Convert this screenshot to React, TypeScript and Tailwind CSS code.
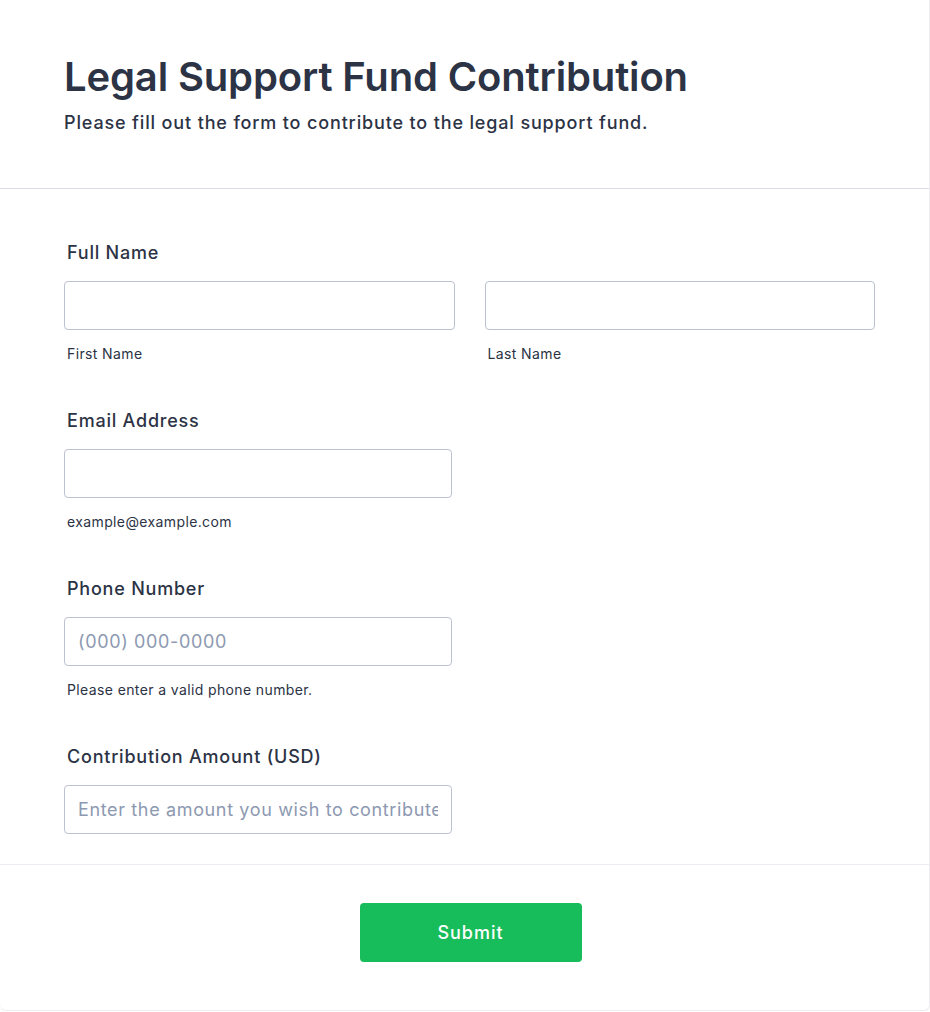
import React from "react";

function Section({
  label,
  children,
  sub,
  last,
}: {
  label: string;
  children: React.ReactNode;
  sub?: React.ReactNode;
  last?: boolean;
}) {
  return (
    <div className={last ? "" : "mb-[43px]"}>
      <div className="pl-[3px] pt-[2px] text-[18px] leading-[24px] font-medium tracking-[0.78px] text-[#2c3345]">
        {label}
      </div>
      <div className="mt-[16px]">{children}</div>
      {sub}
    </div>
  );
}

function Input({ placeholder, className }: { placeholder?: string; className?: string }) {
  return (
    <input
      type="text"
      placeholder={placeholder}
      className={
        "block h-[49px] rounded-[4px] border border-[#bcc2cf] bg-white px-[13px] text-[18px] tracking-[0.64px] text-[#2c3345] placeholder:text-[#8d99b1] outline-none " +
        (className ?? "")
      }
    />
  );
}

function Sub({ text }: { text: string }) {
  return (
    <div className="mt-[14px] pl-[3px] text-[14px] leading-[20px] tracking-[0.38px] text-[#2c3345]">{text}</div>
  );
}

export default function App() {
  return (
    <div className="min-h-screen bg-white" style={{ fontFamily: "Inter, 'Noto Sans', sans-serif" }}>
      <div className="w-[930px] h-[1011px] rounded-b-[6px] border-r border-b border-[#ececf2] bg-white">
        <div className="px-[64px] pt-[53px] pb-[53px] border-b border-[#dcdbe9]">
          <h1 className="text-[40px] leading-[48px] font-semibold text-[#2c3345] tracking-[-0.15px]">
            Legal Support Fund Contribution
          </h1>
          <p className="mt-[10px] text-[18px] leading-[24px] font-medium tracking-[0.85px] text-[#2c3345]">
            Please fill out the form to contribute to the legal support fund.
          </p>
        </div>

        <div className="pl-[64px] pr-[54px] pt-[50px] pb-[30px] border-b border-[#ececf3]">
          <Section label="Full Name">
            <div className="flex gap-[30px]">
              <div className="flex-1">
                <Input className="w-full" />
                <Sub text="First Name" />
              </div>
              <div className="flex-1">
                <Input className="w-full" />
                <Sub text="Last Name" />
              </div>
            </div>
          </Section>

          <Section label="Email Address" sub={<Sub text="example@example.com" />}>
            <Input className="w-[388px]" />
          </Section>

          <Section label="Phone Number" sub={<Sub text="Please enter a valid phone number." />}>
            <Input className="w-[388px]" placeholder="(000) 000-0000" />
          </Section>

          <Section label="Contribution Amount (USD)" last>
            <Input className="w-[388px]" placeholder="Enter the amount you wish to contribute" />
          </Section>
        </div>

        <div className="flex justify-center pt-[38px]">
          <button className="w-[222px] h-[59px] rounded-[4px] bg-[#18bd5b] text-white text-[18px] font-medium tracking-[1px] ml-[12px]">
            Submit
          </button>
        </div>
      </div>
    </div>
  );
}
